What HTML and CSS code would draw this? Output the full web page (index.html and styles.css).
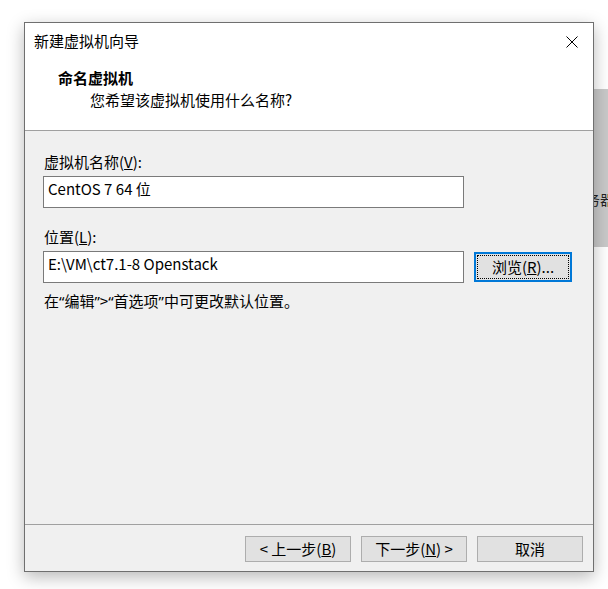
FILE: index.html
```html
<!DOCTYPE html>
<html lang="zh-CN">
<head>
<meta charset="utf-8">
<title>新建虚拟机向导</title>
<link rel="stylesheet" href="styles.css">
</head>
<body>
<div class="page">
  <div class="dialog">
    <div class="titlebar">
      <span class="title">新建虚拟机向导</span>
      <span class="close" aria-label="关闭">
        <svg width="12" height="12" viewBox="0 0 12 12"><path d="M0.5 0.5 L11.5 11.5 M11.5 0.5 L0.5 11.5" stroke="#000" stroke-width="1" fill="none"/></svg>
      </span>
    </div>
    <div class="header">
      <div class="heading">命名虚拟机</div>
      <div class="subheading">您希望该虚拟机使用什么名称?</div>
    </div>
    <div class="content">
      <div class="label">虚拟机名称(<u>V</u>):</div>
      <div class="row">
        <div class="input">CentOS 7 64 位</div>
      </div>
      <div class="label label2">位置(<u>L</u>):</div>
      <div class="row">
        <div class="input">E:\VM\ct7.1-8 Openstack</div>
        <div class="btn browse"><span class="focus">浏览(<u>R</u>)...</span></div>
      </div>
      <div class="hint">在<span class="q">“</span>编辑<span class="q">”</span>&gt;<span class="q">“</span>首选项<span class="q">”</span>中可更改默认位置。</div>
    </div>
    <div class="footer">
      <div class="btn">&lt;&nbsp;上一步(<u>B</u>)</div>
      <div class="btn">下一步(<u>N</u>)&nbsp;&gt;</div>
      <div class="btn">取消</div>
    </div>
  </div>
  <div class="behind">
    <span class="behind-text">服务器</span>
  </div>
</div>
</body>
</html>
```
FILE: styles.css
```css
html, body {
  margin: 0;
  padding: 0;
  background: #ffffff;
  width: 608px;
  height: 589px;
  overflow: hidden;
}

body {
  font-family: "Noto Sans CJK SC", sans-serif;
  font-size: 15px;
  color: #000;
}

.page {
  display: flex;
  align-items: flex-start;
  padding: 22px 0 0 24px;
}

.dialog {
  position: relative;
  z-index: 1;
  flex: none;
  width: 570px;
  height: 550px;
  box-sizing: border-box;
  border: 1px solid #6f6f6f;
  background: #f0f0f0;
  box-shadow: 0 5px 16px rgba(0, 0, 0, 0.28);
  display: flex;
  flex-direction: column;
}

.titlebar {
  height: 36px;
  background: #fff;
  display: flex;
  align-items: center;
  justify-content: space-between;
  padding: 0 15px 0 9px;
  line-height: 20px;
}

.title {
  margin-top: -1px;
}

.close {
  display: flex;
  width: 12px;
  height: 12px;
  margin-top: 1px;
}

.header {
  background: #fff;
  border-bottom: 1px solid #a0a0a0;
  padding: 9px 0 0 33px;
  box-sizing: border-box;
  height: 72px;
}

.heading {
  font-weight: bold;
  line-height: 20px;
}

.subheading {
  line-height: 20px;
  margin-top: 2px;
  padding-left: 32px;
}

.content {
  flex: 1;
  padding: 21px 0 0 18px;
}

.label {
  line-height: 20px;
  padding-left: 1px;
}

.label2 {
  margin-top: 19px;
}

.row {
  display: flex;
  align-items: flex-start;
  margin-top: 4px;
}

.input {
  width: 421px;
  height: 32px;
  box-sizing: border-box;
  border: 1px solid #7a7a7a;
  background: #fff;
  padding: 2px 0 0 4px;
  line-height: 20px;
}

.btn {
  box-sizing: border-box;
  border: 1px solid #adadad;
  background: #e1e1e1;
  display: flex;
  align-items: center;
  justify-content: center;
  line-height: 20px;
  width: 106px;
  height: 26px;
}

.browse {
  width: 98px;
  height: 30px;
  margin: 1px 0 0 10px;
  border: 2px solid #0078d7;
  padding: 1px;
}

.browse .focus {
  flex: 1;
  align-self: stretch;
  border: 1px dotted #000;
  display: flex;
  align-items: center;
  justify-content: center;
}

.hint {
  margin-top: 8px;
  line-height: 20px;
  padding-left: 1px;
}

.q {
  font-family: "Noto Sans", sans-serif;
}

.footer {
  height: 47px;
  box-sizing: border-box;
  border-top: 1px solid #a0a0a0;
  display: flex;
  justify-content: flex-end;
  align-items: flex-start;
  gap: 10px;
  padding: 11px 10px 0 0;
}

.behind {
  flex: none;
  width: 40px;
  height: 158px;
  box-sizing: border-box;
  margin: 67px 0 0 -26px;
  background: #c9c9c9;
  overflow: hidden;
  padding: 102px 0 0 24px;
}

.behind-text {
  display: block;
  white-space: nowrap;
  color: #222;
  font-size: 14px;
  line-height: 16px;
  margin-left: -20px;
}
```
